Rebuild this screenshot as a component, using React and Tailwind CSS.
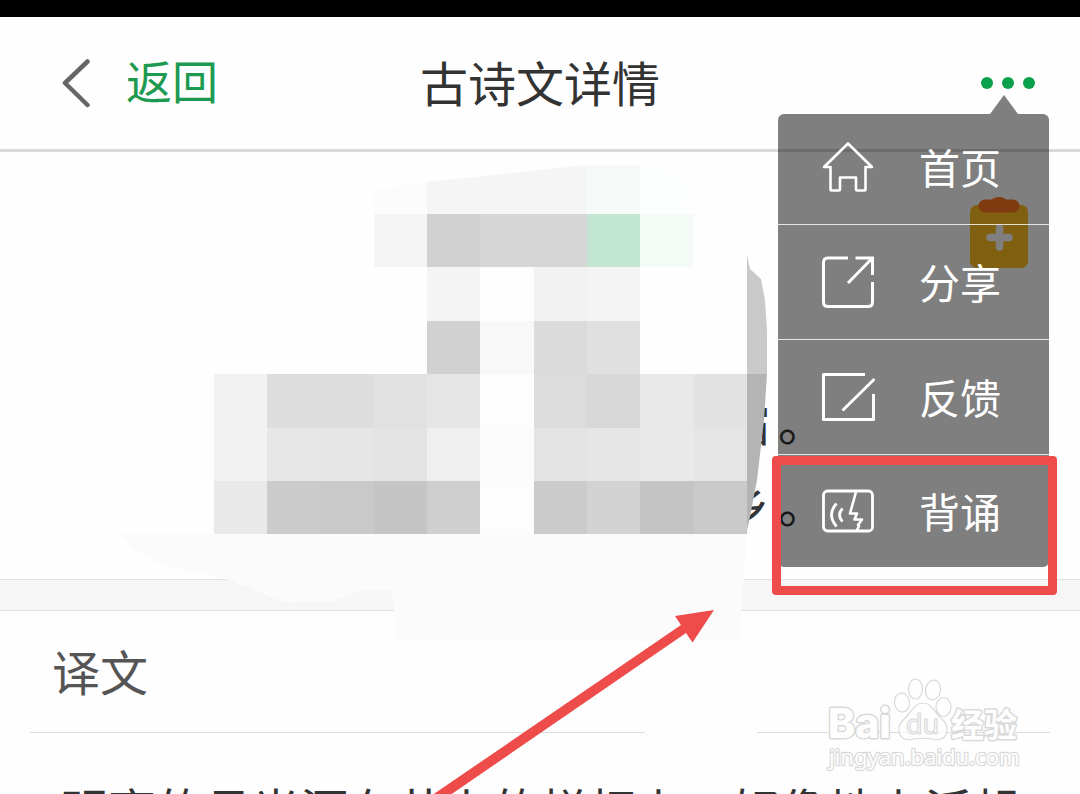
import React from 'react';

const COLS = [214, 267, 320, 374, 427, 480, 534, 587, 640, 694, 747];
const ROWS = [214, 267, 321, 374, 428, 481, 534];
const CELLS = [
  ['', '', '', '#f5f5f5', '#d1d1d1', '#d6d6d6', '#d6d6d6', '#c3e6d3', '#f4faf5', ''],
  ['', '', '', '', '#f4f4f4', '#fdfdfd', '#f2f2f2', '#f4f4f4', '', ''],
  ['', '', '', '', '#d1d1d1', '#f8f8f8', '#dbdbdb', '#e0e0e0', '', ''],
  ['#f2f2f2', '#dddddd', '#dddddd', '#e1e1e1', '#e5e5e5', '#fdfdfd', '#dcdcdc', '#d8d8d8', '#e8e8e8', '#e2e2e2'],
  ['#f2f2f2', '#e7e7e7', '#e6e6e6', '#e4e4e4', '#efefef', '#fcfcfc', '#e3e3e3', '#e6e6e6', '#e9e9e9', '#e5e5e5'],
  ['#e9e9e9', '#cccccc', '#c9c9c9', '#c5c5c5', '#cfcfcf', '#fdfdfd', '#cbcbcb', '#d3d3d3', '#c4c4c4', '#cacaca'],
];

function Mosaic() {
  return (
    <svg
      aria-hidden="true"
      viewBox="0 0 1080 794"
      className="pointer-events-none absolute top-0 left-1/2 h-[794px] w-[1080px] -translate-x-1/2"
    >
      <path d="M120 534H747L739 641H397L392 590H362L330 602L285 603L230 580L160 565L135 550Z" fill="#fbfbfb" />
      <path d="M374 190L427 182V214H374Z" fill="#fcfcfc" />
      <path d="M427 182L587 165V214H427Z" fill="#f5f5f5" />
      <path d="M587 165H640V214H587Z" fill="#f6fbf9" />
      <path d="M640 165L672 170L700 190L680 214H640Z" fill="#fcfdfd" />
      <g shapeRendering="crispEdges">
        {CELLS.map((row, r) =>
          row.map((fill, c) =>
            fill ? (
              <rect
                key={`${r}-${c}`}
                x={COLS[c]}
                y={ROWS[r]}
                width={COLS[c + 1] - COLS[c]}
                height={ROWS[r + 1] - ROWS[r]}
                fill={fill}
              />
            ) : null,
          ),
        )}
      </g>
      <path d="M747 255L750 269L761 279L765 300L767 330V374H747Z" fill="#c9c9c9" />
      <path d="M747 374H767L764 420L757 480L749 522L746 534H747Z" fill="#b4b4b4" />
      <path d="M645 695H740L757 720V748H670L645 740Z" fill="#fdfdfd" />
    </svg>
  );
}

function PointerArrow() {
  return (
    <svg
      aria-hidden="true"
      viewBox="0 0 1080 794"
      className="pointer-events-none absolute top-0 left-1/2 h-[794px] w-[1080px] -translate-x-1/2"
    >
      <path d="M714 610L675 616L681 625L425 800H443L686 633L692.5 642.5Z" fill="#ee4b4b" />
    </svg>
  );
}

function HomeIcon() {
  return (
    <svg viewBox="0 0 54 54" className="size-[54px]" fill="none" stroke="#fff" strokeWidth="2.6" strokeLinejoin="round" aria-hidden="true">
      <path d="M27 3.5L3 27h6.500v22.500q0 1 1 1h7.500q1 0 1-1V37.500h16v12q0 1 1 1h7.500q1 0 1-1V27H51Z" />
    </svg>
  );
}

function ShareIcon() {
  return (
    <svg viewBox="0 0 54 54" className="size-[54px]" fill="none" stroke="#fff" strokeWidth="3" aria-hidden="true">
      <path d="M27 3H7q-4.500 0-4.500 4.500V47q0 4.500 4.500 4.500h40q4.500 0 4.500-4.500V27" />
      <path d="M34.500 3H51.500V20M51 3.500L27 28" />
    </svg>
  );
}

function FeedbackIcon() {
  return (
    <svg viewBox="0 0 54 54" className="size-[54px]" fill="none" stroke="#fff" strokeWidth="3" strokeLinejoin="round" aria-hidden="true">
      <path d="M44 4.500H2.500V49.500H52.500V24" />
      <path d="M53.500 9L21.500 40.500" />
    </svg>
  );
}

function ReciteIcon() {
  return (
    <svg viewBox="0 0 54 54" className="size-[54px]" fill="none" stroke="#fff" strokeWidth="2.8" strokeLinejoin="round" aria-hidden="true">
      <rect x="2.500" y="7" width="49" height="40" rx="4" />
      <path d="M35 8L29 29.500h7l-2.500 6h7.500l-4 5.500l1 1L35.500 47" strokeWidth="2.600" />
      <path d="M15.500 19.500q-10 11 0 23M21.500 24.500q-6 6.500 0 13" />
    </svg>
  );
}

function ClipboardPlusIcon() {
  return (
    <svg viewBox="0 0 58 72" className="h-[72px] w-[58px]" aria-hidden="true">
      <rect y="8" width="58" height="63" rx="7" fill="#ffc020" />
      <path d="M15 2.500h7Q24 0 29 0t7 2.500h7a6.500 6.500 0 0 1 0 13H15a6.500 6.500 0 0 1 0-13Z" fill="#ff7420" />
      <path d="M29.500 31V50M20 40.500H39" stroke="#fff" strokeWidth="7.500" strokeLinecap="round" />
    </svg>
  );
}

function MenuItem({ icon, label, className }) {
  return (
    <li className={className}>
      <button type="button" className="flex h-full w-full items-center gap-[44px] pl-[43px] text-[41px] leading-none text-white">
        {icon}
        <span className="pb-0.5">{label}</span>
      </button>
    </li>
  );
}

function MoreMenu() {
  return (
    <div className="absolute top-[95px] right-[31px] w-[271px]">
      <svg viewBox="0 0 28 19" className="mr-[31px] ml-auto block h-[19px] w-[28px]" aria-hidden="true">
        <path d="M14 0L28 19H0Z" fill="#000" fillOpacity="0.5" />
      </svg>
      <ul className="overflow-hidden rounded-[6px] bg-black/50">
        <MenuItem icon={<HomeIcon />} label="首页" className="h-[111px] border-b border-white/80 pb-1" />
        <MenuItem icon={<ShareIcon />} label="分享" className="h-[115px] border-b border-white/80" />
        <MenuItem icon={<FeedbackIcon />} label="反馈" className="h-[115px] border-b border-white/80" />
        <MenuItem icon={<ReciteIcon />} label="背诵" className="h-[112px]" />
      </ul>
      <div className="pointer-events-none absolute -right-2 -bottom-7 -left-1.5 h-[139px] rounded-[4px] border-[9px] border-[#ee4b4b]" />
    </div>
  );
}

function Watermark() {
  return (
    <svg
      viewBox="0 0 210 104"
      className="absolute right-[50px] bottom-[16px] h-[104px] w-[210px]"
      fill="#fefefe"
      fillOpacity="0.7"
      stroke="#d9d9d9"
      strokeWidth="1.200"
      strokeLinejoin="round"
      role="img"
      aria-label="Baidu 经验"
    >
      <ellipse cx="82" cy="28.500" rx="7.500" ry="9.500" transform="rotate(-8 82 28.500)" />
      <ellipse cx="95.500" cy="15" rx="7" ry="10" />
      <ellipse cx="113" cy="16" rx="7.500" ry="10" transform="rotate(10 113 16)" />
      <ellipse cx="123.500" cy="33" rx="7.500" ry="9.500" />
      <path d="M103 29c8 0 11 8 16 13c6 6 9 10 8 15c-1 8-8 10-15 8c-6-1-12-1-18 0c-7 2-14 0-15-8c-1-5 2-9 8-15c5-5 8-13 16-13Z" />
      <text x="8" y="64" fontFamily="Inter, sans-serif" fontWeight="800" fontSize="41" fillOpacity="1" paintOrder="stroke" strokeWidth="3">Bai</text>
      <text x="86" y="60" fontFamily="'Noto Sans', sans-serif" fontWeight="400" fontSize="27">du</text>
      <text x="131" y="63" fontFamily="'Noto Sans CJK SC', sans-serif" fontWeight="700" fontSize="33" fillOpacity="1" paintOrder="stroke" strokeWidth="3">经验</text>
      <text x="9" y="91" fontFamily="'Noto Sans', sans-serif" fontSize="22" fillOpacity="1" paintOrder="stroke" strokeWidth="2.400">jingyan.baidu.com</text>
    </svg>
  );
}

export default function App() {
  return (
    <div className="relative h-screen overflow-hidden bg-[#fefefe] font-['Noto_Sans_CJK_SC',sans-serif] text-[#333]">
      <div className="h-[17px] bg-black" />
      <header className="grid h-[135px] grid-cols-3 items-center border-b-[3px] border-[#d9d9d9]">
        <button type="button" className="flex items-center gap-[35px] pl-[61px] text-left text-[46px] leading-none text-[#1c9a50]">
          <svg viewBox="0 0 30 50" className="h-[50px] w-[30px]" fill="none" stroke="#666" strokeWidth="4.500" strokeLinecap="round" strokeLinejoin="round" aria-hidden="true">
            <path d="M26.500 3.500L4 25L26.500 47" />
          </svg>
          <span className="pb-2">返回</span>
        </button>
        <h1 className="pb-1 text-center text-[48px] leading-none font-normal whitespace-nowrap">古诗文详情</h1>
        <button type="button" aria-label="更多" className="mr-[45px] flex gap-[9px] justify-self-end">
          <span className="size-3 rounded-full bg-[#0ba14b]" />
          <span className="size-3 rounded-full bg-[#0ba14b]" />
          <span className="size-3 rounded-full bg-[#0ba14b]" />
        </button>
      </header>

      <section className="relative flex h-[427px] flex-col items-center pt-[227px] text-[48px] leading-[82px]">
        <p className="flex w-[572px] justify-end gap-2">
          <span>霜</span>
          <span>。</span>
        </p>
        <p className="flex w-[572px] justify-end gap-2">
          <span>乡</span>
          <span>。</span>
        </p>
        <button type="button" aria-label="收藏" className="absolute top-[45px] right-[52px]">
          <ClipboardPlusIcon />
        </button>
      </section>

      <div className="h-8 border-y border-[#e2e2e2] bg-[#f6f6f6]" />

      <section className="px-[30px]">
        <h2 className="h-[122px] border-b border-[#dcdcdc] px-[22px] pt-[19px] text-[48px] leading-[80px] font-normal text-[#555]">
          译文
        </h2>
        <p className="px-[30px] pt-[35px] text-[48px] leading-[80px] whitespace-nowrap">
          明亮的月光洒在井上的栏杆上，好像地上泛起
        </p>
      </section>

      <Mosaic />
      <PointerArrow />
      <MoreMenu />
      <Watermark />
    </div>
  );
}
